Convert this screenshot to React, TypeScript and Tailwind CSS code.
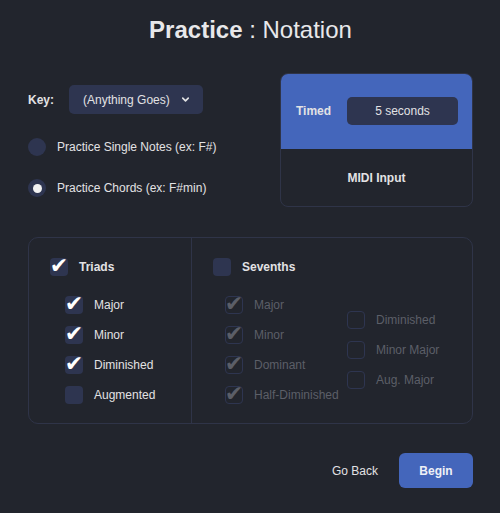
import { ChevronDown } from "lucide-react";

type Item = { label: string; checked: boolean };

const triads: Item[] = [
  { label: "Major", checked: true },
  { label: "Minor", checked: true },
  { label: "Diminished", checked: true },
  { label: "Augmented", checked: false },
];

const seventhsA: Item[] = [
  { label: "Major", checked: true },
  { label: "Minor", checked: true },
  { label: "Dominant", checked: true },
  { label: "Half-Diminished", checked: true },
];

const seventhsB: Item[] = [
  { label: "Diminished", checked: false },
  { label: "Minor Major", checked: false },
  { label: "Aug. Major", checked: false },
];

function Box({ checked, disabled }: { checked: boolean; disabled?: boolean }) {
  return (
    <span
      className={
        disabled
          ? "flex h-[18px] w-[18px] shrink-0 items-center justify-center rounded-[4px] border border-[#2e3550] pb-[2px] text-[22px] leading-none text-[#5b5e67]"
          : "flex h-[18px] w-[18px] shrink-0 items-center justify-center rounded-[4px] bg-[#2e3550] pb-[2px] text-[22px] leading-none text-white"
      }
      style={{ fontFamily: '"DejaVu Sans", sans-serif' }}
    >
      {checked ? "✔" : ""}
    </span>
  );
}

function Row({ item, disabled, bold }: { item: Item; disabled?: boolean; bold?: boolean }) {
  return (
    <div className="flex h-[18px] items-center gap-[11px]">
      <Box checked={item.checked} disabled={disabled} />
      <span
        className={
          (disabled ? "text-[#5c5f68]" : "text-[#e2e2e4]") + (bold ? " font-bold" : "")
        }
      >
        {item.label}
      </span>
    </div>
  );
}

function Radio({ selected, label }: { selected: boolean; label: string }) {
  return (
    <div className="flex items-center gap-[11px]">
      <span className="flex h-[18px] w-[18px] items-center justify-center rounded-full bg-[#2e3550]">
        {selected && <span className="h-[9px] w-[9px] rounded-full bg-[#f2f2f2]" />}
      </span>
      <span>{label}</span>
    </div>
  );
}

export default function App() {
  return (
    <div
      className="h-[513px] w-[500px] bg-[#22252d] pl-7 pr-[27px] text-[12px] text-[#e2e2e4]"
      style={{ fontFamily: '"Liberation Sans", Arial, sans-serif' }}
    >
      {/* Title */}
      <div className="flex h-[60px] items-center justify-center pb-[1px] text-[24px] text-[#e8e8ea]">
        <span className="font-bold">Practice</span>
        <span className="whitespace-pre"> : Notation</span>
      </div>

      {/* Settings */}
      <div className="mt-[13px] flex justify-between">
        <div className="flex flex-col">
          <div className="mt-[12px] flex items-center gap-[15px]">
            <span className="font-bold">Key:</span>
            <div className="flex h-[29px] w-[134px] items-center justify-between rounded-[5px] bg-[#2e3550] pl-[14px] pr-[12px]">
              <span>(Anything Goes)</span>
              <ChevronDown size={11} strokeWidth={3.5} />
            </div>
          </div>
          <div className="mt-[24px] flex flex-col gap-[23px]">
            <Radio selected={false} label="Practice Single Notes (ex: F#)" />
            <Radio selected label="Practice Chords (ex: F#min)" />
          </div>
        </div>

        <div className="flex h-[134px] w-[193px] flex-col overflow-hidden rounded-[8px] border border-[#2f3448]">
          <div className="flex h-[75px] items-center justify-between bg-[#4466bb] pb-[1px] pl-[15px] pr-[14px]">
            <span className="font-bold">Timed</span>
            <div className="flex h-[28px] w-[111px] items-center justify-center rounded-[5px] bg-[#2e3550]">
              5 seconds
            </div>
          </div>
          <div className="flex flex-1 items-center justify-center font-bold">
            MIDI Input
          </div>
        </div>
      </div>

      {/* Chord types */}
      <div className="mt-[30px] flex h-[187px] rounded-[10px] border border-[#2f3448]">
        <div className="w-[163px] border-r border-[#2f3448] pl-[21px] pt-[20px]">
          <Row item={{ label: "Triads", checked: true }} bold />
          <div className="mt-[20px] flex flex-col gap-[12px] pl-[15px]">
            {triads.map((t) => (
              <Row key={t.label} item={t} />
            ))}
          </div>
        </div>
        <div className="flex-1 pl-[21px] pt-[20px]">
          <Row item={{ label: "Sevenths", checked: false }} bold />
          <div className="mt-[20px] flex items-center pl-[12px]">
            <div className="flex w-[122px] flex-col gap-[12px]">
              {seventhsA.map((t) => (
                <Row key={t.label} item={t} disabled />
              ))}
            </div>
            <div className="flex flex-col gap-[12px]">
              {seventhsB.map((t) => (
                <Row key={t.label} item={t} disabled />
              ))}
            </div>
          </div>
        </div>
      </div>

      {/* Actions */}
      <div className="mt-[29px] flex items-center justify-end gap-[21px]">
        <button className="text-[#e2e2e4]">Go Back</button>
        <button className="h-[35px] w-[74px] rounded-[6px] bg-[#4466bb] font-bold text-[#eef0f6]">
          Begin
        </button>
      </div>
    </div>
  );
}
